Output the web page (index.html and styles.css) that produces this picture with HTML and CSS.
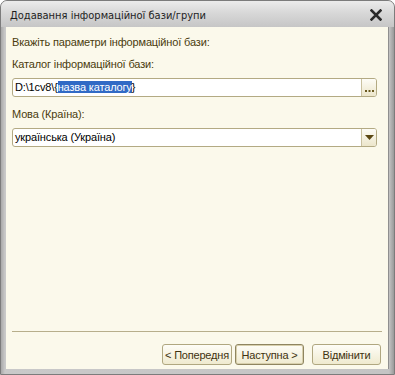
FILE: index.html
```html
<!DOCTYPE html>
<html>
	<head>
		<meta charset='utf-8'/>
		<title>Додавання інформаційної бази/групи</title>
		<link rel="stylesheet" href="styles.css">
	</head>
	<body>
		<div class=window>
			<div class=titlebar>
				<span class=title>Додавання інформаційної бази/групи</span>
				<svg class=close width=12 height=12 viewBox="0 0 12 12">
					<path d="M1.5 1.5 L10.5 10.5 M10.5 1.5 L1.5 10.5" stroke="#2b2b2b" stroke-width="2.6" stroke-linecap="square"/>
				</svg>
			</div>
			<div class=client>
				<div class=form>
					<div class=hint>Вкажіть параметри інформаційної бази:</div>
					<div class=label>Каталог інформаційної бази:</div>
					<div class=field>
						<span class=value>D:\1cv8\{<span class=sel>назва каталогу</span>}</span>
						<span class=fieldbtn>
							<svg width=9 height=3 viewBox="0 0 9 3"><rect x=0 y=0 width=2 height=2 fill="#6b5a1e"/><rect x=3.5 y=0 width=2 height=2 fill="#6b5a1e"/><rect x=7 y=0 width=2 height=2 fill="#6b5a1e"/></svg>
						</span>
					</div>
					<div class=label>Мова (Країна):</div>
					<div class=field>
						<span class=value>українська (Україна)</span>
						<span class="fieldbtn arrow">
							<svg width=9 height=5 viewBox="0 0 9 5"><path d="M0 0 H9 L4.5 5 Z" fill="#5a4712"/></svg>
						</span>
					</div>
				</div>
				<div class=footer>
					<button class=btn>&lt; Попередня</button>
					<button class="btn default">Наступна &gt;</button>
					<button class="btn cancel">Відмінити</button>
				</div>
			</div>
		</div>
	</body>
</html>
```

FILE: styles.css
```css
body {
	margin: 0;
	background: #ffffff;
	font-family: "Liberation Sans", Arial, sans-serif;
}
.window {
	width: 395px;
	height: 375px;
	box-sizing: border-box;
	display: flex;
	flex-direction: column;
	border: 1px solid #7c7c7c;
	border-radius: 7px 7px 0 0;
	background: linear-gradient(to right, #a9a9a9, #c9c9c9 4px, #c4c4c4 388px, #9a9a9a);
	overflow: hidden;
}
.titlebar {
	height: 26px;
	display: flex;
	align-items: center;
	justify-content: space-between;
	padding: 0 12px 0 9px;
	background: linear-gradient(#ececec, #d8d8d8 45%, #c6c6c6);
}
.title {
	font-family: "DejaVu Sans Condensed", "Liberation Sans", sans-serif;
	font-size: 11px;
	color: #1e1e1e;
	padding-top: 2px;
}
.close {
	margin-top: 2px;
}
.client {
	flex: 1;
	display: flex;
	flex-direction: column;
	margin: 0 5px 5px 5px;
	background: #fbf9eb;
	border-right: 1px solid #8f8f8f;
}
.form {
	flex: 1;
	padding: 8px 11px 0 6px;
	font-size: 11px;
	letter-spacing: -0.15px;
	color: #4a3c0e;
}
.hint {
	height: 15px;
	line-height: 15px;
}
.label {
	margin-top: 7px;
	height: 15px;
	line-height: 15px;
}
.field {
	height: 19px;
	box-sizing: border-box;
	display: flex;
	border: 1px solid #b3aa83;
	border-radius: 3px;
	background: #ffffff;
}
.field + .label {
	margin-top: 10px;
}
.label + .field {
	margin-top: 6px;
}
.value {
	flex: 1;
	padding: 0 2px;
	line-height: 17px;
	color: #000000;
	white-space: nowrap;
}
.sel {
	background: #316ac5;
	color: #ffffff;
}
.fieldbtn {
	width: 15px;
	display: flex;
	align-items: flex-end;
	justify-content: center;
	padding-bottom: 3px;
	box-sizing: border-box;
	border-left: 1px solid #c9c1a0;
	border-radius: 0 2px 2px 0;
	background: linear-gradient(#fdfcf6, #ece6cb);
}
.fieldbtn.arrow {
	align-items: center;
	padding-bottom: 0;
}
.footer {
	margin: 0 6px;
	border-top: 1px solid #b7ae8b;
	display: flex;
	justify-content: flex-end;
	align-items: flex-start;
	padding: 12px 1px 0 0;
	height: 25px;
	gap: 3px;
}
.btn {
	width: 70px;
	height: 21px;
	padding: 0;
	font-family: "Liberation Sans", Arial, sans-serif;
	font-size: 11px;
	letter-spacing: -0.2px;
	color: #3f3210;
	border: 1px solid #b0a780;
	border-radius: 3px;
	background: linear-gradient(#fefdf7, #efeacf);
}
.btn.default {
	width: 69px;
	border-color: #8f8560;
	box-shadow: inset 0 0 0 1px #d8d0ad;
}
.btn.cancel {
	width: 69px;
	margin-left: 5px;
}
```
